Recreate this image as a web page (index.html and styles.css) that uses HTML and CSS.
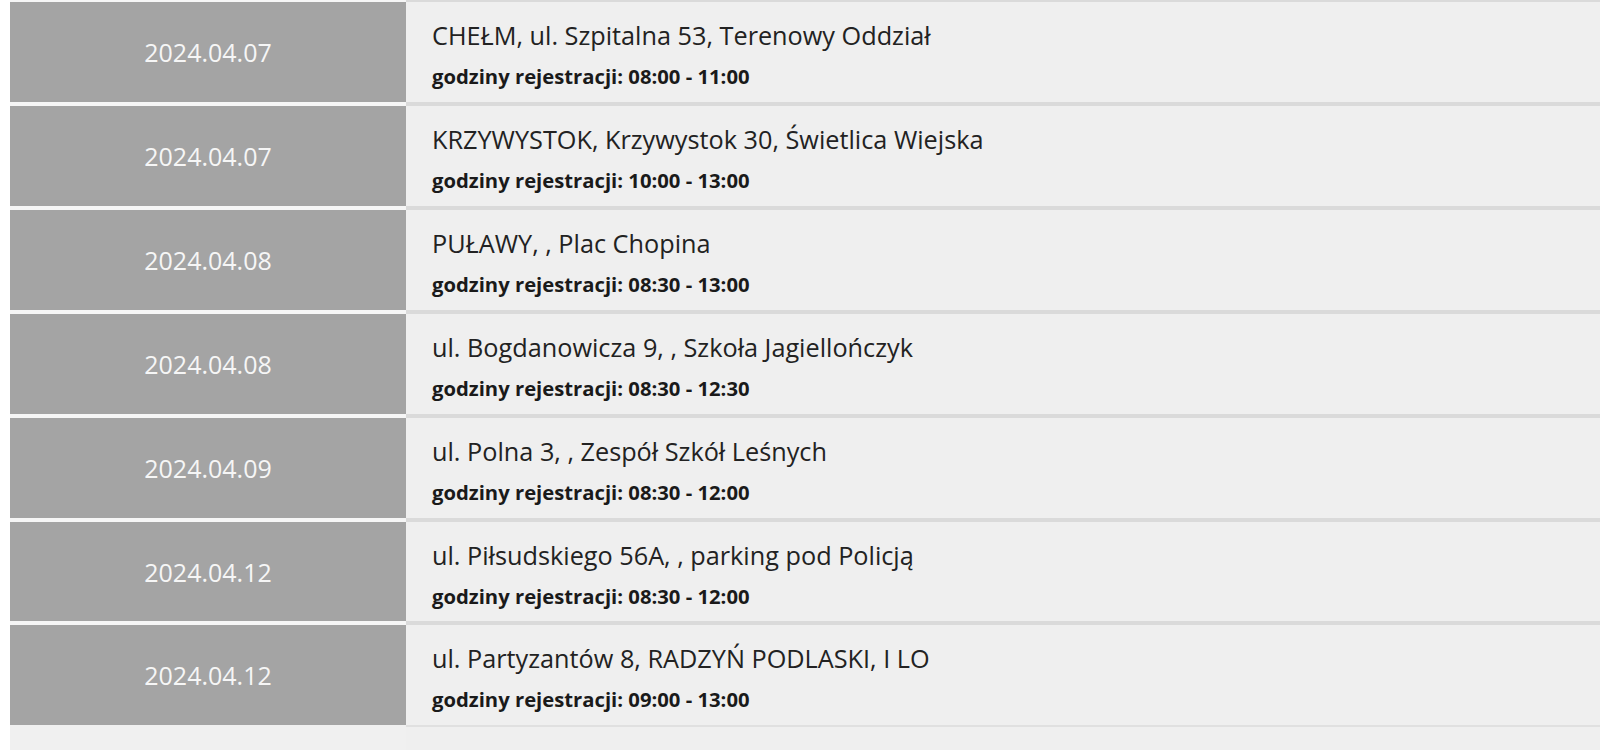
FILE: index.html
```html
<!DOCTYPE html>
<html lang="pl">
<head>
<meta charset="utf-8">
<title>Terminy</title>
<link rel="stylesheet" href="styles.css">
</head>
<body>
<div class="list">
  <div class="row">
    <div class="date">2024.04.07</div>
    <div class="info"><div class="place">CHEŁM, ul. Szpitalna 53, Terenowy Oddział</div><div class="hours">godziny rejestracji: 08:00 - 11:00</div></div>
  </div>
  <div class="row">
    <div class="date">2024.04.07</div>
    <div class="info"><div class="place">KRZYWYSTOK, Krzywystok 30, Świetlica Wiejska</div><div class="hours">godziny rejestracji: 10:00 - 13:00</div></div>
  </div>
  <div class="row">
    <div class="date">2024.04.08</div>
    <div class="info"><div class="place">PUŁAWY, , Plac Chopina</div><div class="hours">godziny rejestracji: 08:30 - 13:00</div></div>
  </div>
  <div class="row">
    <div class="date">2024.04.08</div>
    <div class="info"><div class="place">ul. Bogdanowicza 9, , Szkoła Jagiellończyk</div><div class="hours">godziny rejestracji: 08:30 - 12:30</div></div>
  </div>
  <div class="row">
    <div class="date">2024.04.09</div>
    <div class="info"><div class="place">ul. Polna 3, , Zespół Szkół Leśnych</div><div class="hours">godziny rejestracji: 08:30 - 12:00</div></div>
  </div>
  <div class="row">
    <div class="date">2024.04.12</div>
    <div class="info"><div class="place">ul. Piłsudskiego 56A, , parking pod Policją</div><div class="hours">godziny rejestracji: 08:30 - 12:00</div></div>
  </div>
  <div class="row">
    <div class="date">2024.04.12</div>
    <div class="info"><div class="place">ul. Partyzantów 8, RADZYŃ PODLASKI, I LO</div><div class="hours">godziny rejestracji: 09:00 - 13:00</div></div>
  </div>
  <div class="footer">
    <div class="footer-left"></div>
    <div class="footer-right"></div>
  </div>
</div>
</body>
</html>
```
FILE: styles.css
```css
html, body {
  margin: 0;
  padding: 0;
  background: #ffffff;
  height: 100%;
}
body {
  padding-left: 10px;
  font-family: "Open Sans", "Noto Sans", sans-serif;
  overflow: hidden;
}
.list {
  display: flex;
  flex-direction: column;
}
.row {
  display: grid;
  grid-template-columns: 396px 1fr;
}
.date {
  box-sizing: border-box;
  height: 103.9px;
  background: #a4a4a4;
  border-top: 4px solid #f6f6f6;
  display: flex;
  align-items: center;
  justify-content: center;
  color: #f6f6f6;
  font-size: 25px;
}
.info {
  box-sizing: border-box;
  height: 103.9px;
  background: #efefef;
  border-top: 4px solid #dadada;
  padding: 17px 0 0 26px;
  color: #222222;
}
.row:first-child .date,
.row:first-child .info {
  border-top-width: 2px;
  height: 102px;
}
.place {
  font-size: 25.25px;
  line-height: 33px;
}
.hours {
  margin-top: 11px;
  font-size: 20.25px;
  line-height: 27px;
  font-weight: 700;
  color: #1a1a1a;
}
.footer {
  display: grid;
  grid-template-columns: 396px 1fr;
  height: 40px;
}
.footer-left {
  background: #f0f0f0;
}
.footer-right {
  background: #efefef;
  border-top: 2px solid #e0e0e0;
}
```
